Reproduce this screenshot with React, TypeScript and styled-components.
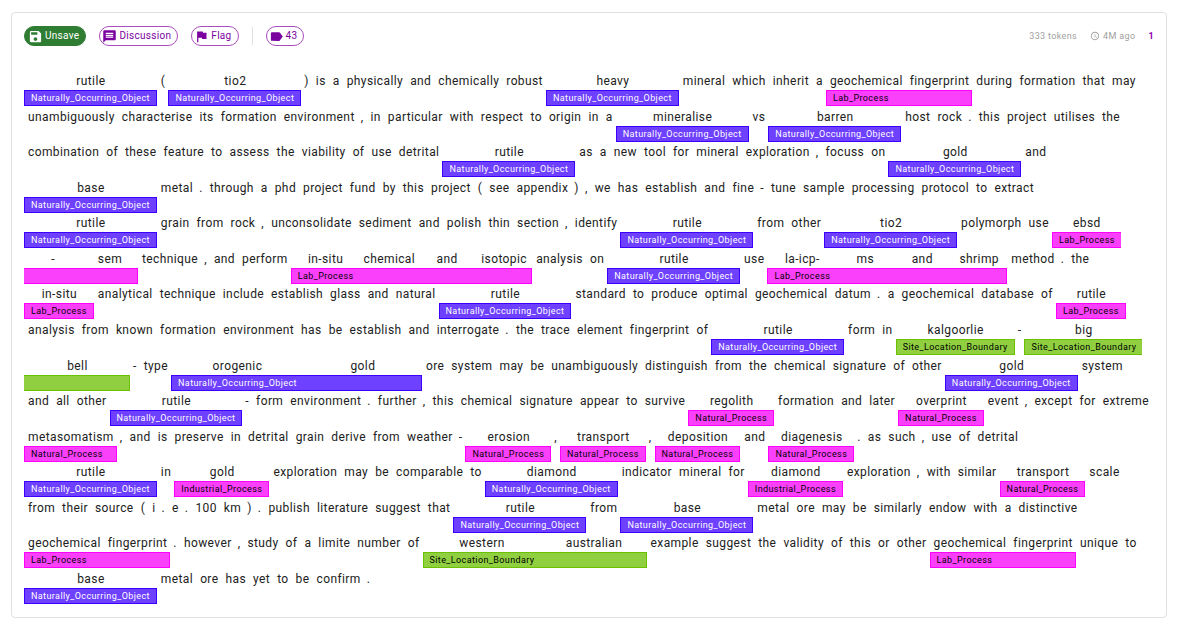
import React, { Fragment } from 'react';
import styled, { createGlobalStyle } from 'styled-components';
import { MdSave, MdMessage, MdFlag, MdLabel, MdAccessTime } from 'react-icons/md';

const GlobalStyle = createGlobalStyle`
  * { box-sizing: border-box; }
  body { margin: 0; background: #fff; color: #212121; font-family: Roboto, sans-serif; }
`;

const Card = styled.article`
  display: flex;
  flex-direction: column;
  gap: 24px;
  min-height: calc(100vh - 22px);
  margin: 12px 11px 10px;
  padding: 12px 12px 13px;
  border: 1px solid #e0e0e0;
  border-radius: 4px;
`;

const Header = styled.header`
  display: flex;
  align-items: center;
  justify-content: space-between;
  height: 22px;
`;

const Actions = styled.div`
  display: flex;
  align-items: center;
  gap: 13px;
`;

const Chip = styled.button<{ $filled?: boolean }>`
  display: flex;
  align-items: center;
  gap: 2px;
  height: 20px;
  padding: ${p => (p.$filled ? '0 6px 0 3px' : '0 6px 0 2px')};
  border: 1px solid ${p => (p.$filled ? '#2e7d32' : '#a94dbe')};
  border-radius: 10px;
  background: ${p => (p.$filled ? '#2e7d32' : '#fff')};
  color: ${p => (p.$filled ? '#fff' : '#7b00a0')};
  font: 400 10px/18px Roboto, sans-serif;
  letter-spacing: 0.03em;
  cursor: pointer;
  svg { width: 15px; height: 15px; }
`;

const Divider = styled.span`
  width: 1px;
  height: 18px;
  background: #e0e0e0;
`;

const Meta = styled.div`
  display: flex;
  align-items: center;
  gap: 13px;
  color: #a0a0a0;
  font-size: 9px;
  line-height: 14px;
  letter-spacing: 0.04em;
`;

const Age = styled.span`
  display: flex;
  align-items: center;
  gap: 3px;
  svg { width: 10px; height: 10px; }
`;

const Contributors = styled.strong`
  color: #8e00b4;
  font-weight: 700;
`;

const Tokens = styled.div`
  display: flex;
  flex: 1;
  flex-wrap: wrap;
  align-content: space-between;
  font-size: 12px;
  letter-spacing: 0.0333em;
`;

const Token = styled.span<{ $min?: number }>`
  display: flex;
  flex-direction: column;
  min-width: ${p => p.$min ?? 0}px;
  height: 35px;
`;

const Word = styled.span<{ $mark?: boolean }>`
  padding: 2px 3px 0 ${p => (p.$mark ? 3 : 4)}px;
  line-height: 17px;
  text-align: center;
`;

type Kind = 'nat' | 'lab' | 'site' | 'proc' | 'ind';

const kinds: Record<Kind, { name: string; fill: string; edge: string; ink: string; tail: number }> = {
  nat: { name: 'Naturally_Occurring_Object', fill: '#6e40ff', edge: '#3d00ff', ink: '#fff', tail: 119 },
  lab: { name: 'Lab_Process', fill: '#fb40fb', edge: '#f0f', ink: '#000', tail: 57 },
  site: { name: 'Site_Location_Boundary', fill: '#90d040', edge: '#6bc000', ink: '#000', tail: 106 },
  proc: { name: 'Natural_Process', fill: '#fb40fb', edge: '#f0f', ink: '#000', tail: 72 },
  ind: { name: 'Industrial_Process', fill: '#fb40fb', edge: '#f0f', ink: '#000', tail: 80 },
};

const Label = styled.span<{ $kind: Kind; $first: boolean; $last: boolean }>`
  height: 16px;
  padding: 0 6px;
  border: 1px solid ${p => kinds[p.$kind].edge};
  ${p => !p.$first && 'border-left: 0;'}
  ${p => !p.$last && 'border-right: 0;'}
  background: ${p => kinds[p.$kind].fill};
  color: ${p => kinds[p.$kind].ink};
  font-size: 9px;
  line-height: 14px;
  white-space: nowrap;
`;

// Entities are written as [kind:words]; every other word stands alone.
const text = `[nat:rutile] ( [nat:tio2] ) is a physically and chemically robust [nat:heavy] mineral which inherit a [lab:geochemical fingerprint] during formation that may
unambiguously characterise its formation environment , in particular with respect to origin in a [nat:mineralise] vs [nat:barren] host rock . this project utilises the
combination of these feature to assess the viability of use detrital [nat:rutile] as a new tool for mineral exploration , focuss on [nat:gold] and
[nat:base] metal . through a phd project fund by this project ( see appendix ) , we has establish and fine - tune sample processing protocol to extract
[nat:rutile] grain from rock , unconsolidate sediment and polish thin section , identify [nat:rutile] from other [nat:tio2] polymorph use [lab:ebsd - sem]
technique , and perform [lab:in-situ chemical and isotopic] analysis on [nat:rutile] use [lab:la-icp- ms and shrimp] method . the
[lab:in-situ] analytical technique include establish glass and natural [nat:rutile] standard to produce optimal geochemical datum . a geochemical database of [lab:rutile]
analysis from known formation environment has be establish and interrogate . the trace element fingerprint of [nat:rutile] form in [site:kalgoorlie] - [site:big bell]
- type [nat:orogenic gold] ore system may be unambiguously distinguish from the chemical signature of other [nat:gold] system
and all other [nat:rutile] - form environment . further , this chemical signature appear to survive [proc:regolith] formation and later [proc:overprint] event , except for extreme
[proc:metasomatism] , and is preserve in detrital grain derive from weather - [proc:erosion] , [proc:transport] , [proc:deposition] and [proc:diagenesis] . as such , use of detrital
[nat:rutile] in [ind:gold] exploration may be comparable to [nat:diamond] indicator mineral for [ind:diamond] exploration , with similar [proc:transport] scale
from their source ( i . e . 100 km ) . publish literature suggest that [nat:rutile] from [nat:base] metal ore may be similarly endow with a distinctive
[lab:geochemical fingerprint] . however , study of a limite number of [site:western australian] example suggest the validity of this or other [lab:geochemical fingerprint] unique to
[nat:base] metal ore has yet to be confirm .`;

const chunks = text.match(/\[[^\]]+\]|\S+/g) ?? [];

// Closing marks and dashes sit one pixel closer to the word before them.
const isMark = (chunk: string) => /^[).,-]$/.test(chunk);

function Entity({ kind, words }: { kind: Kind; words: string[] }) {
  return (
    <>
      {words.map((word, i) => (
        <Token key={i} $min={i > 0 ? kinds[kind].tail : 0}>
          <Word>{word}</Word>
          <Label $kind={kind} $first={i === 0} $last={i === words.length - 1}>
            {i === 0 ? kinds[kind].name : ''}
          </Label>
        </Token>
      ))}
    </>
  );
}

export default function App() {
  return (
    <>
      <GlobalStyle />
      <Card>
        <Header>
          <Actions>
            <Chip $filled><MdSave />Unsave</Chip>
            <Chip><MdMessage />Discussion</Chip>
            <Chip><MdFlag />Flag</Chip>
            <Divider />
            <Chip><MdLabel />43</Chip>
          </Actions>
          <Meta>
            <span>333 tokens</span>
            <Age><MdAccessTime />4M ago</Age>
            <Contributors>1</Contributors>
          </Meta>
        </Header>
        <Tokens>
          {chunks.map((chunk, i) => {
            const entity = chunk.match(/^\[(\w+):(.+)\]$/);
            return (
              <Fragment key={i}>
                {entity ? (
                  <Entity kind={entity[1] as Kind} words={entity[2].split(' ')} />
                ) : (
                  <Token><Word $mark={isMark(chunk)}>{chunk}</Word></Token>
                )}
              </Fragment>
            );
          })}
        </Tokens>
      </Card>
    </>
  );
}
